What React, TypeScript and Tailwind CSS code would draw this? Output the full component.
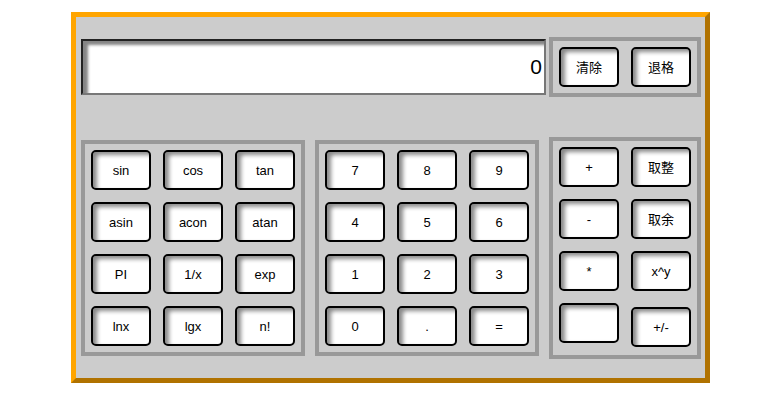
import React from 'react';

const font = { fontFamily: '"Liberation Sans", "Noto Sans CJK SC", Arial, sans-serif' };

// one calculator key
function Key({ label, className = '' }: { label: string; className?: string }) {
  return (
    <button
      className={`w-[60px] h-[40px] pt-[2px] rounded-[5px] border-2 border-black bg-white text-[13px] text-black shadow-[inset_4px_3px_4px_#8a8a8a] ${className}`}
    >
      {label}
    </button>
  );
}

const sciKeys = ['sin', 'cos', 'tan', 'asin', 'acon', 'atan', 'PI', '1/x', 'exp', 'lnx', 'lgx', 'n!'];
const numKeys = ['7', '8', '9', '4', '5', '6', '1', '2', '3', '0', '.', '='];

export default function App() {
  return (
    <div className="w-full h-[405px] bg-white" style={font}>
      <div className="ml-[71px] pt-[12px]">
        <div className="w-[639px] h-[371px] border-[5px] border-t-[#ffa500] border-l-[#ffa500] border-r-[#b07200] border-b-[#b07200] bg-[#cccccc] pl-[5px] pr-[4px] pt-[20px]">
          {/* display + clear buttons */}
          <div className="flex items-center gap-[3px]">
            <div className="w-[466px] h-[56px] border-2 border-t-[#222] border-l-[#222] border-r-[#777] border-b-[#777] bg-white shadow-[inset_5px_4px_3px_#858585] flex items-center justify-end pr-[2px] text-[21px] text-black">
              0
            </div>
            <div className="w-[152px] h-[60px] border-4 border-[#999] p-[6px] flex gap-[12px]">
              <Key label="清除" />
              <Key label="退格" />
            </div>
          </div>

          {/* keypads */}
          <div className="mt-[40px] flex items-center gap-[10px]">
            <div className="w-[224px] h-[216px] border-4 border-[#999] p-[6px] grid grid-cols-3 gap-[12px]">
              {sciKeys.map((k) => (
                <Key key={k} label={k} />
              ))}
            </div>
            <div className="w-[224px] h-[216px] border-4 border-[#999] p-[6px] grid grid-cols-3 gap-[12px]">
              {numKeys.map((k) => (
                <Key key={k} label={k} />
              ))}
            </div>
            <div className="w-[152px] h-[222px] border-4 border-[#999] p-[6px] flex flex-col gap-[12px]">
              <div className="flex gap-[12px]">
                <Key label="+" />
                <Key label="取整" />
              </div>
              <div className="flex gap-[12px]">
                <Key label="-" />
                <Key label="取余" />
              </div>
              <div className="flex gap-[12px]">
                <Key label="*" />
                <Key label="x^y" />
              </div>
              <div className="flex gap-[12px] items-start">
                <Key label="" />
                <Key label="+/-" className="mt-[4px]" />
              </div>
            </div>
          </div>
        </div>
      </div>
    </div>
  );
}
